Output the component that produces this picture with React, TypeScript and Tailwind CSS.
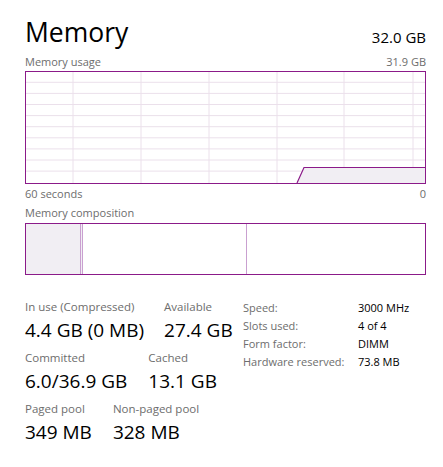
const hLines = [10.3, 21.4, 32.5, 43.6, 54.7, 65.8, 76.9, 88, 99.1];
const vLines = [47, 115, 183, 251, 318, 387];

function UsageChart() {
  return (
    <div className="h-[113px] border border-[#8b1a89]">
      <svg width="399" height="111" viewBox="0 0 399 111" className="block">
        {hLines.map((y) => (
          <line key={y} x1="0" x2="399" y1={y} y2={y} stroke="#ebe0eb" strokeWidth="1" />
        ))}
        {vLines.map((x) => (
          <line key={x} x1={x} x2={x} y1="0" y2="111" stroke="#ebe0eb" strokeWidth="1" />
        ))}
        <polygon points="271,111 278,95.5 399,95.5 399,111" fill="#f1eef3" />
        <polyline points="271,111 278,95.5 399,95.5" fill="none" stroke="#8b1a89" strokeWidth="1.2" />
      </svg>
    </div>
  );
}

function Stat({ label, value }: { label: string; value: string }) {
  return (
    <div className="flex flex-col">
      <span className="text-[11.5px] leading-[16px] text-[#6d6d6d]">{label}</span>
      <span className="text-[19px] leading-[26px] text-black mt-[2px]">{value}</span>
    </div>
  );
}

const specs = [
  ["Speed:", "3000 MHz"],
  ["Slots used:", "4 of 4"],
  ["Form factor:", "DIMM"],
  ["Hardware reserved:", "73.8 MB"],
];

export default function App() {
  return (
    <div
      className="w-[443px] h-[467px] bg-white pl-[25px] pr-[17px] pt-[14px]"
      style={{ fontFamily: '"Segoe UI", "Open Sans", sans-serif' }}
    >
      {/* Header */}
      <div className="flex items-end justify-between">
        <span className="text-[26.5px] leading-[36px] text-black">Memory</span>
        <span className="text-[15px] leading-[22px] text-black mb-[2px]">32.0 GB</span>
      </div>

      {/* Memory usage graph */}
      <div className="flex justify-between text-[11px] leading-[16px] text-[#6d6d6d] mt-[4px] mb-[1px]">
        <span>Memory usage</span>
        <span>31.9 GB</span>
      </div>
      <UsageChart />
      <div className="flex justify-between text-[11px] leading-[16px] text-[#6d6d6d] mt-[2px]">
        <span>60 seconds</span>
        <span>0</span>
      </div>

      {/* Memory composition */}
      <div className="text-[11px] leading-[16px] text-[#6d6d6d] mt-[3px] mb-[2px]">Memory composition</div>
      <div className="flex h-[52px] border border-[#8b1a89]">
        <div className="w-[57px] bg-[#f1eef3] border-r-[3px] border-double border-[#c9a0d0]" />
        <div className="w-[164px] border-r border-[#c9a0d0]" />
        <div className="flex-1" />
      </div>

      {/* Stats */}
      <div className="flex mt-[24px]">
        <div className="flex flex-col gap-[7px] w-[218px]">
          <div className="flex gap-[20px]">
            <Stat label="In use (Compressed)" value="4.4 GB (0 MB)" />
            <Stat label="Available" value="27.4 GB" />
          </div>
          <div className="flex gap-[21px]">
            <Stat label="Committed" value="6.0/36.9 GB" />
            <Stat label="Cached" value="13.1 GB" />
          </div>
          <div className="flex gap-[21px]">
            <Stat label="Paged pool" value="349 MB" />
            <Stat label="Non-paged pool" value="328 MB" />
          </div>
        </div>
        <div className="flex flex-col text-[11px] leading-[18px]">
          {specs.map(([k, v]) => (
            <div key={k} className="flex">
              <span className="w-[115px] text-[#6d6d6d]">{k}</span>
              <span className="text-black">{v}</span>
            </div>
          ))}
        </div>
      </div>
    </div>
  );
}
